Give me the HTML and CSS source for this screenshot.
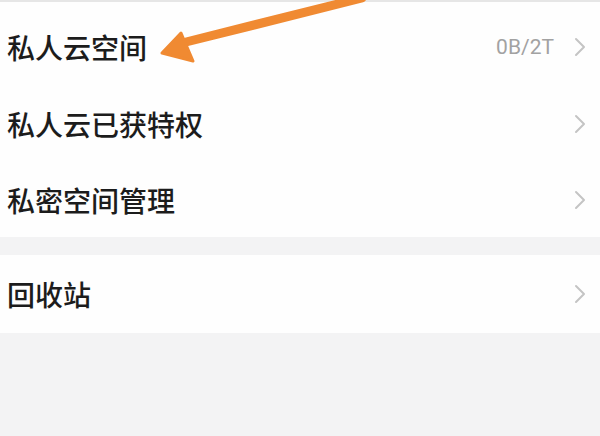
FILE: index.html
```html
<!DOCTYPE html>
<html lang="zh-CN">
<head>
<meta charset="utf-8">
<title>私人云</title>
<link rel="stylesheet" href="styles.css">
</head>
<body>
<div class="page">
  <div class="group group-first">
    <div class="row row-a">
      <span class="label">私人云空间</span>
      <span class="right"><span class="value">0B/2T</span><svg class="chev" viewBox="0 0 12 20"><polyline points="2,2 10,10 2,18"/></svg></span>
    </div>
    <div class="row row-b">
      <span class="label">私人云已获特权</span>
      <span class="right"><svg class="chev" viewBox="0 0 12 20"><polyline points="2,2 10,10 2,18"/></svg></span>
    </div>
    <div class="row row-c">
      <span class="label">私密空间管理</span>
      <span class="right"><svg class="chev" viewBox="0 0 12 20"><polyline points="2,2 10,10 2,18"/></svg></span>
    </div>
  </div>
  <div class="group">
    <div class="row row-d">
      <span class="label">回收站</span>
      <span class="right"><svg class="chev" viewBox="0 0 12 20"><polyline points="2,2 10,10 2,18"/></svg></span>
    </div>
  </div>
  <svg class="arrow" viewBox="0 0 600 80" width="600" height="80">
    <line x1="362" y1="-2" x2="186" y2="42" />
    <polygon points="162,53 181,33 193,61" />
  </svg>
</div>
</body>
</html>
```

FILE: styles.css
```css
* { box-sizing: border-box; }
html, body {
  margin: 0;
  padding: 0;
  background: #f3f3f4;
}
.page {
  position: relative;
  width: 600px;
  height: 436px;
  background: #f3f3f4;
  font-family: "Noto Sans CJK SC", "Noto Sans", sans-serif;
  overflow: hidden;
}
.group {
  background: #fefefe;
}
.group-first {
  border-top: 2px solid #e6e6e6;
  padding-top: 7px;
  margin-bottom: 18px;
}
.row {
  display: flex;
  align-items: center;
  justify-content: space-between;
  padding: 0 14px 0 7px;
}
.row-a { height: 76px; }
.row-b { height: 77px; }
.row-c { height: 75px; }
.row-d { height: 78px; }
.label {
  font-size: 28px;
  font-weight: 500;
  color: #1c1c1c;
  letter-spacing: 0;
  line-height: 1;
}
.right {
  display: flex;
  align-items: center;
  gap: 20px;
}
.value {
  font-family: "Roboto", "Noto Sans", sans-serif;
  font-size: 21px;
  color: #a2a2a2;
}
.chev {
  width: 12px;
  height: 20px;
}
.chev polyline {
  fill: none;
  stroke: #c4c4c4;
  stroke-width: 2;
  stroke-linecap: round;
  stroke-linejoin: round;
}
.arrow {
  position: absolute;
  left: 0;
  top: 0;
}
.arrow line {
  stroke: #f08a32;
  stroke-width: 9;
  stroke-linecap: round;
}
.arrow polygon {
  fill: #f08a32;
  stroke: #f08a32;
  stroke-width: 3;
  stroke-linejoin: round;
}
```
